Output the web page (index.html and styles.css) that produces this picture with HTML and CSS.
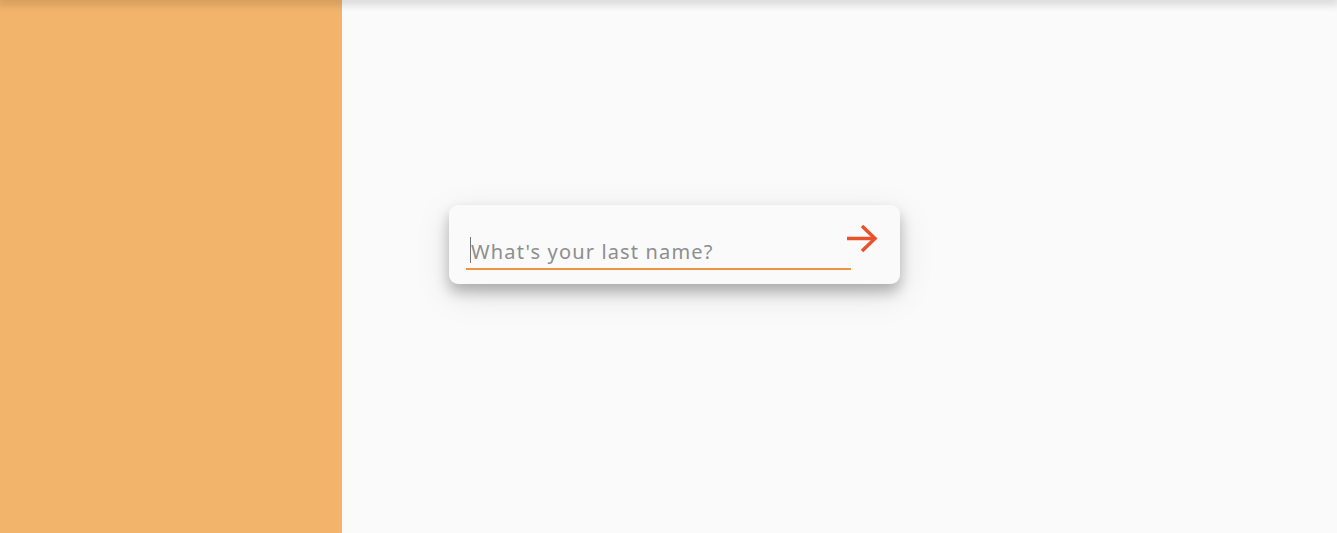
FILE: index.html
```html
<!DOCTYPE html>
<html>
<head>
<meta charset="utf-8">
<link rel="stylesheet" href="styles.css">
</head>
<body>
<div class="topbar"></div>
<div class="layout">
  <aside class="sidebar"></aside>
  <main class="main">
    <div class="card">
      <div class="field">
        <span class="caret"></span>
        <span class="placeholder">What's your last name?</span>
      </div>
      <button class="next" aria-label="Next">
        <svg width="32" height="30" viewBox="0 0 32 30">
          <path d="M1 13.5 H29" stroke="#e8532b" stroke-width="3.5" fill="none"/>
          <path d="M16 1 L29 13.5 L16 26" stroke="#e8532b" stroke-width="3.5" fill="none"/>
        </svg>
      </button>
    </div>
  </main>
</div>
</body>
</html>
```
FILE: styles.css
```css
html, body {
  margin: 0;
  height: 100%;
}
body {
  font-family: "Noto Sans", sans-serif;
  background: #fafafa;
  overflow: hidden;
}
.topbar {
  position: fixed;
  top: 0;
  left: 0;
  right: 0;
  height: 0;
  box-shadow: 0 0 10px 3px rgba(0,0,0,0.22);
  z-index: 5;
}
.layout {
  display: flex;
  height: 100%;
}
.sidebar {
  width: 342px;
  background: #f2b46b;
  flex: none;
}
.main {
  flex: 1;
  background: #fafafa;
  padding: 205px 0 0 107px;
}
.card {
  width: 451px;
  height: 79px;
  box-sizing: border-box;
  background: #fafafa;
  border-radius: 9px;
  box-shadow: 0 8px 14px rgba(0,0,0,0.26), 0 10px 36px rgba(0,0,0,0.10);
  display: flex;
  align-items: flex-start;
  padding: 20px 0 0 17px;
  position: relative;
}
.field {
  width: 385px;
  height: 45px;
  box-sizing: border-box;
  border-bottom: 2px solid #ee9440;
  display: flex;
  align-items: flex-end;
  padding: 0 0 3px 4px;
}
.caret {
  width: 1px;
  height: 26px;
  background: #777;
  margin-bottom: 2px;
}
.placeholder {
  font-size: 20px;
  color: #8e8e8e;
  line-height: 26px;
  letter-spacing: 1.15px;
}
.next {
  border: 0;
  background: none;
  padding: 0;
  margin: 0 0 0 -5px;
  display: flex;
  cursor: pointer;
}
```
